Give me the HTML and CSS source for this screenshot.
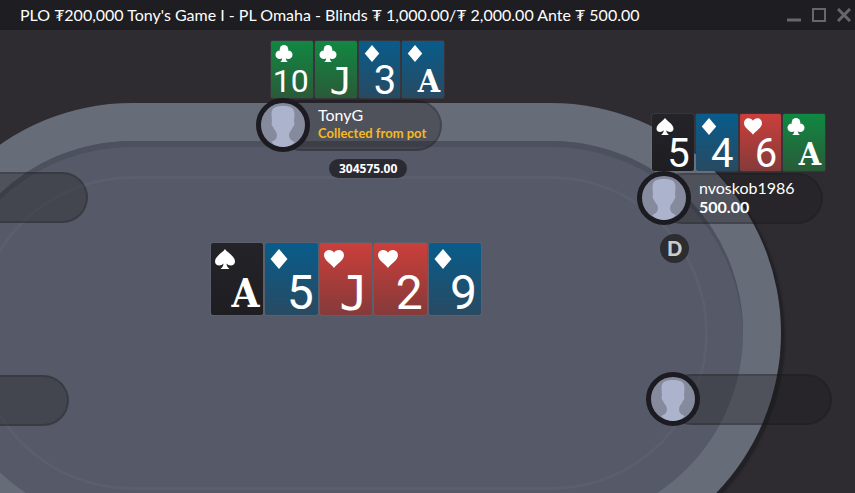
FILE: index.html
```html
<!DOCTYPE html>
<html lang="en">
<head>
  <meta charset="UTF-8">
  <meta name="viewport" content="width=device-width, initial-scale=1.0">
  <title>PLO Table</title>
  <link rel="stylesheet" href="styles.css">
</head>
<body>

  <svg class="symbols" aria-hidden="true">
    <symbol id="spade" viewBox="0 0 20 20">
      <path d="M10 0C8 3.500 0 7 0 12.500c0 4.500 6 5 8.500 2-.2 2.500-1 3.500-3 5.500h9c-2-2-2.800-3-3-5.500 2.500 3 8.500 2.500 8.500-2C20 7 12 3.500 10 0z"/>
    </symbol>
    <symbol id="diamond" viewBox="0 0 20 20">
      <path d="M10 0l8.500 10L10 20 1.500 10z"/>
    </symbol>
    <symbol id="heart" viewBox="0 0 22 20">
      <path d="M11 20C8 15.500 0 11.500 0 6 0 2.500 2.500 0 5.500 0 8 0 10 1.200 11 3c1-1.800 3-3 5.500-3C19.500 0 22 2.500 22 6c0 5.500-8 9.500-11 14z"/>
    </symbol>
    <symbol id="club" viewBox="0 0 20 20">
      <circle cx="10" cy="5" r="5"/>
      <circle cx="5" cy="11.500" r="5"/>
      <circle cx="15" cy="11.500" r="5"/>
      <path d="M8 8h4v6c.3 3 1 5 2.500 6h-9c2-1 2.200-3 2.500-6z"/>
    </symbol>
    <symbol id="person" viewBox="0 0 44 44">
      <path d="M22 3c8 0 11.500 2 11.500 8 0 3-.6 5-.4 8 .8 1 .2 4-1.200 5-1 3-3.200 4-3.700 7-.5 4 1 6 5.500 8-2 3-7 5-11.700 5s-9.700-2-11.700-5c4.500-2 6-4 5.500-8-.5-3-2.700-4-3.700-7-1.400-1-2-4-1.200-5 .2-3-.4-5-.4-8 0-6 3.500-8 11.500-8z"/>
    </symbol>
  </svg>

  <header class="titlebar">
    <h1 class="title">PLO ₮200,000 Tony's Game I - PL Omaha - Blinds ₮ 1,000.00/₮ 2,000.00 Ante ₮ 500.00</h1>
    <div class="controls">
      <button type="button" aria-label="Minimize"><svg viewBox="0 0 14 14"><path stroke-width="3" d="M0 12h14"/></svg></button>
      <button type="button" aria-label="Maximize"><svg viewBox="0 0 14 14"><path d="M1 1h12v12H1z"/></svg></button>
      <button type="button" aria-label="Close"><svg viewBox="0 0 14 14"><path stroke-width="3" d="M1 1l12 12M13 1L1 13"/></svg></button>
    </div>
  </header>

  <main class="room">
    <div class="rail"></div>
    <div class="felt"></div>
    <div class="line"></div>

    <div class="seat seat-left-top"><div class="panel"></div></div>
    <div class="seat seat-left-bottom"><div class="panel"></div></div>

    <section class="seat seat-top">
      <div class="hand">
        <div class="card green"><svg class="suit"><use href="#club"/></svg><span class="rank ten">10</span></div>
        <div class="card green"><svg class="suit"><use href="#club"/></svg><span class="rank jack">J</span></div>
        <div class="card blue"><svg class="suit"><use href="#diamond"/></svg><span class="rank">3</span></div>
        <div class="card blue"><svg class="suit"><use href="#diamond"/></svg><span class="rank ace">A</span></div>
      </div>
      <div class="panel">
        <svg class="avatar"><use href="#person"/></svg>
        <div class="info">
          <span class="name">TonyG</span>
          <span class="status">Collected from pot</span>
        </div>
      </div>
    </section>

    <section class="seat seat-right">
      <div class="hand">
        <div class="card black"><svg class="suit"><use href="#spade"/></svg><span class="rank">5</span></div>
        <div class="card blue"><svg class="suit"><use href="#diamond"/></svg><span class="rank">4</span></div>
        <div class="card red"><svg class="suit"><use href="#heart"/></svg><span class="rank">6</span></div>
        <div class="card green"><svg class="suit"><use href="#club"/></svg><span class="rank ace">A</span></div>
      </div>
      <div class="panel">
        <svg class="avatar"><use href="#person"/></svg>
        <div class="info">
          <span class="name">nvoskob1986</span>
          <span class="stack">500.00</span>
        </div>
      </div>
    </section>

    <section class="seat seat-right-bottom">
      <div class="panel">
        <svg class="avatar"><use href="#person"/></svg>
      </div>
    </section>

    <div class="pot">304575.00</div>
    <div class="dealer">D</div>

    <div class="board">
      <div class="card black"><svg class="suit"><use href="#spade"/></svg><span class="rank ace">A</span></div>
      <div class="card blue"><svg class="suit"><use href="#diamond"/></svg><span class="rank">5</span></div>
      <div class="card red"><svg class="suit"><use href="#heart"/></svg><span class="rank jack">J</span></div>
      <div class="card red"><svg class="suit"><use href="#heart"/></svg><span class="rank">2</span></div>
      <div class="card blue"><svg class="suit"><use href="#diamond"/></svg><span class="rank">9</span></div>
    </div>
  </main>

</body>
</html>
```

FILE: styles.css
```css
*,
*::before {
  margin: 0;
  padding: 0;
  box-sizing: border-box;
}

body {
  display: flex;
  flex-direction: column;
  height: 100vh;
  overflow: hidden;
  background: #2e2c31;
  color: #fff;
  font-family: Lato, 'Noto Sans', sans-serif;
}

.symbols {
  display: none;
}

.titlebar {
  display: flex;
  justify-content: space-between;
  align-items: center;
  height: 30px;
  padding: 0 4px 0 20px;
  background: #1e1d22;
}

.title {
  font-size: 16px;
  font-weight: 400;
  line-height: 30px;
  white-space: nowrap;
}

.controls {
  display: flex;
  gap: 11px;
}

.controls button {
  width: 14px;
  height: 14px;
  border: none;
  background: none;
  cursor: pointer;
}

.controls svg {
  display: block;
  width: 14px;
  height: 14px;
  fill: none;
  stroke: #67666a;
  stroke-width: 2;
}

.room {
  position: relative;
  flex: 1;
  overflow: hidden;
}

/* table */
.rail,
.felt,
.line {
  position: absolute;
  border-radius: 230px;
}

.rail {
  left: -98px;
  top: 73px;
  width: 879px;
  height: 460px;
  background: #676c79;
  box-shadow: 4px 3px 2px #222126;
}

.felt {
  left: -60px;
  top: 111px;
  width: 803px;
  height: 384px;
  background: #565967;
  box-shadow: inset 0 6px 0 #4c515d;
}

.line {
  left: -25px;
  top: 146px;
  width: 733px;
  height: 314px;
  border: 3px solid #5b5e6c;
}

/* seats */
.seat {
  position: absolute;
  width: 186px;
}

.seat-top {
  left: 256px;
  top: 11px;
}

.seat-right {
  left: 637px;
  top: 84px;
}

.seat-right-bottom {
  left: 646px;
  top: 342px;
}

.seat-left-top {
  left: -98px;
  top: 140px;
}

.seat-left-bottom {
  left: -117px;
  top: 343px;
}

.panel {
  position: relative;
  display: flex;
  align-items: center;
  height: 54px;
}

.panel::before {
  content: '';
  position: absolute;
  left: 20px;
  right: 0;
  top: 2px;
  height: 51px;
  border: 2px solid rgba(20, 20, 24, 0.2);
  border-radius: 26px;
  background: rgba(24, 22, 24, 0.3);
}

.avatar {
  position: relative;
  width: 54px;
  height: 54px;
  border: 5px solid #1c1b22;
  border-radius: 50%;
  background: #858a9c;
  fill: #abb4cc;
}

.info {
  position: relative;
  display: flex;
  flex-direction: column;
  padding-left: 8px;
  padding-bottom: 3px;
  line-height: 19px;
}

.name {
  font-size: 16px;
}

.status {
  color: #f5b921;
  font-size: 13px;
  font-weight: 700;
}

.stack {
  font-size: 16px;
  font-weight: 700;
}

/* cards */
.hand,
.board {
  display: flex;
  gap: 2px;
}

.hand {
  width: 173px;
  height: 57px;
  margin-left: 15px;
}

.board {
  position: absolute;
  left: 211px;
  top: 213px;
  width: 270px;
  height: 72px;
}

.card {
  display: flex;
  flex: 1;
  flex-direction: column;
  justify-content: space-between;
  min-width: 0;
  border-radius: 2px;
  box-shadow: 0 0 1px #9b9ba5;
}

.black {
  background: linear-gradient(#242428, #1e1e22);
}

.blue {
  background: linear-gradient(#085c8b, #284a62);
}

.red {
  background: linear-gradient(#cb3f3b, #853a3a);
}

.green {
  background: linear-gradient(#108842, #2a5a38);
}

.suit {
  width: 18px;
  height: 17px;
  margin: 4px 0 0 4px;
  fill: #fff;
}

.rank {
  padding-right: 4px;
  font-family: Roboto, sans-serif;
  font-size: 40px;
  font-weight: 400;
  line-height: 34px;
  text-align: right;
}

.jack {
  font-family: 'DejaVu Sans Mono', monospace;
  font-size: 38px;
}

.ace {
  font-family: 'DejaVu Serif Condensed', 'DejaVu Serif', serif;
  font-size: 32px;
  font-weight: 700;
}

.ten {
  font-size: 32px;
}

.board .suit {
  width: 20px;
  height: 20px;
  margin: 6px 0 0 4px;
}

.board .rank {
  font-size: 48px;
  line-height: 44px;
}

.board .ace {
  font-size: 40px;
}

/* chips and labels */
.pot {
  position: absolute;
  left: 329px;
  top: 129px;
  padding: 0 10px;
  border-radius: 10px;
  background: #2b2a33;
  font-family: 'Noto Sans', sans-serif;
  font-size: 12px;
  font-weight: 700;
  line-height: 19px;
}

.dealer {
  position: absolute;
  left: 660px;
  top: 204px;
  width: 29px;
  height: 29px;
  border-radius: 50%;
  background: #2d2c31;
  color: #ccc;
  font-size: 20px;
  font-weight: 900;
  line-height: 29px;
  text-align: center;
}
```
